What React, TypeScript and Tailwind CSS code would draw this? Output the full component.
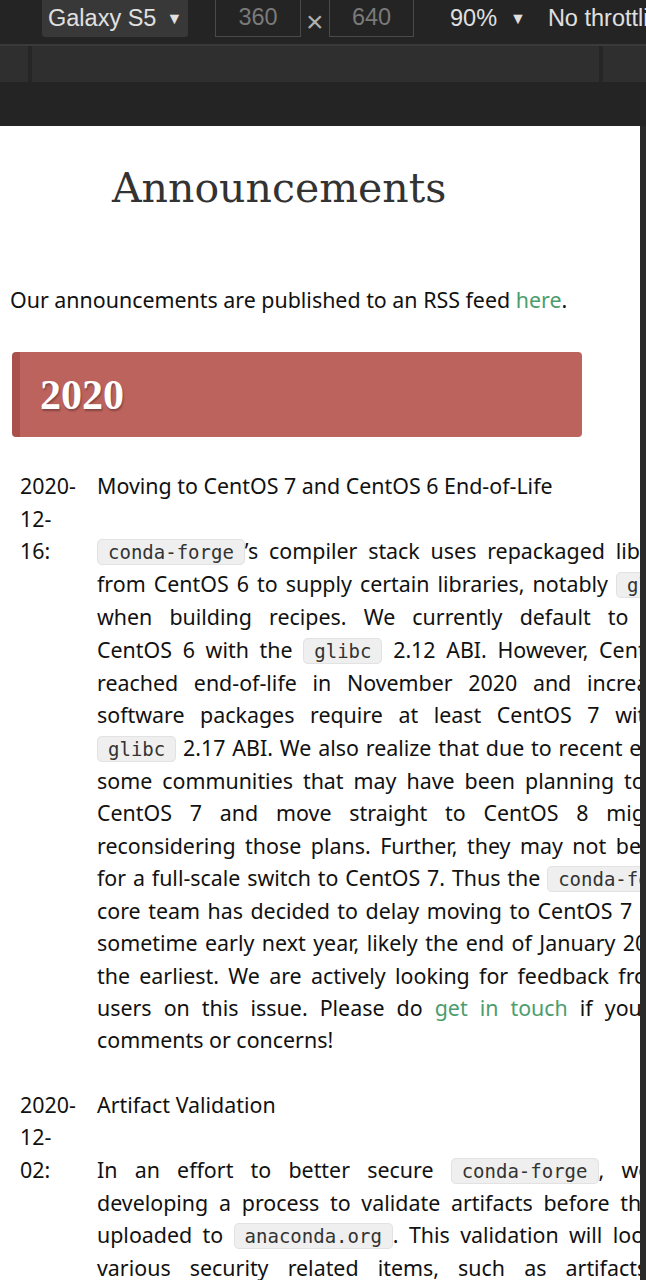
import React from "react";

type Part = string | { code: string } | { link: string };

interface Line {
  parts: Part[];
  w?: string;
  last?: boolean;
}

interface Entry {
  date: string[];
  title: string;
  lines: Line[];
}

// Each row is a justified line of the narrow mobile column; the page overflows its right edge.
const entries: Entry[] = [
  {
    date: ["2020-", "12-", "16:"],
    title: "Moving to CentOS 7 and CentOS 6 End-of-Life",
    lines: [
      { parts: [{ code: "conda-forge" }, "’s compiler stack uses repackaged libraries"], w: "w-[600px]" },
      { parts: ["from CentOS 6 to supply certain libraries, notably ", { code: "glibc" }, ","], w: "w-[604px]" },
      { parts: ["when building recipes. We currently default to using"], w: "w-[604px]" },
      { parts: ["CentOS 6 with the ", { code: "glibc" }, " 2.12 ABI. However, CentOS 6"], w: "w-[600px]" },
      { parts: ["reached end-of-life in November 2020 and increasingly"] },
      { parts: ["software packages require at least CentOS 7 with the"] },
      { parts: [{ code: "glibc" }, " 2.17 ABI. We also realize that due to recent events"], w: "w-[598px]" },
      { parts: ["some communities that may have been planning to skip"], w: "w-[598px]" },
      { parts: ["CentOS 7 and move straight to CentOS 8 might be"], w: "w-[612px]" },
      { parts: ["reconsidering those plans. Further, they may not be ready"] },
      { parts: ["for a full-scale switch to CentOS 7. Thus the ", { code: "conda-forge" }], w: "w-[598px]" },
      { parts: ["core team has decided to delay moving to CentOS 7 until"], w: "w-[588px]" },
      { parts: ["sometime early next year, likely the end of January 2021 at"], w: "w-[602px]" },
      { parts: ["the earliest. We are actively looking for feedback from"], w: "w-[570px]" },
      { parts: ["users on this issue. Please do ", { link: "get in touch" }, " if you have"], w: "w-[605px]" },
      { parts: ["comments or concerns!"], last: true },
    ],
  },
  {
    date: ["2020-", "12-", "02:"],
    title: "Artifact Validation",
    lines: [
      { parts: ["In an effort to better secure ", { code: "conda-forge" }, ", we are"], w: "w-[603px]" },
      { parts: ["developing a process to validate artifacts before they are"] },
      { parts: ["uploaded to ", { code: "anaconda.org" }, ". This validation will look for"], w: "w-[598px]" },
      { parts: ["various security related items, such as artifacts that"] },
      { parts: ["might be overwritten in the anaconda.org"] },
    ],
  },
];

function Code({ children }: { children: string }) {
  return (
    <code className="rounded-[5px] border border-[#e2e2e2] bg-[#efefef] px-[10px] py-[1px] font-['DejaVu_Sans_Mono',monospace] text-[19px] text-[#333]">
      {children}
    </code>
  );
}

function TextLine({ line }: { line: Line }) {
  return (
    <div
      className={`${line.w ?? "w-[610px]"} ${line.last ? "text-left" : "text-justify [text-align-last:justify]"}`}
    >
      {line.parts.map((p, i) => {
        if (typeof p === "string") return <React.Fragment key={i}>{p}</React.Fragment>;
        if ("code" in p) return <Code key={i}>{p.code}</Code>;
        return (
          <a key={i} className="text-[#4c9d6e]">
            {p.link}
          </a>
        );
      })}
    </div>
  );
}

function Toolbar() {
  return (
    <div className="font-['Liberation_Sans',Arial,sans-serif]">
      <div className="flex h-[44px] items-start whitespace-nowrap text-[23.5px]">
        <div className="ml-[42px] flex h-[37px] w-[146px] shrink-0 items-center gap-[10px] rounded-b-[3px] bg-[#383838] pl-[6px] text-[#e0e0e0]">
          Galaxy S5 <span className="text-[16px]">▼</span>
        </div>
        <div className="ml-[27px] flex h-[37px] w-[86px] shrink-0 items-center justify-center border border-t-0 border-[#4a4a4a] text-[#7a7a7a]">
          360
        </div>
        <div className="ml-[5px] mr-[6px] mt-[6px] w-[17px] shrink-0 text-center text-[30px] leading-[32px] text-[#b0b0b0]">×</div>
        <div className="flex h-[37px] w-[85px] shrink-0 items-center justify-center border border-t-0 border-[#4a4a4a] text-[#7a7a7a]">
          640
        </div>
        <div className="ml-[36px] flex h-[37px] shrink-0 items-center gap-[13px] text-[#e0e0e0]">
          90% <span className="text-[16px]">▼</span>
        </div>
        <div className="ml-[22px] flex h-[37px] shrink-0 items-center text-[#e0e0e0]">No throttling</div>
      </div>
      <div className="h-[2px] bg-[#3a3a3a]" />
      <div className="flex h-[36px] bg-[#2f2f2f]">
        <div className="ml-[28px] w-[4px] bg-[#262626]" />
        <div className="ml-[567px] w-[4px] bg-[#262626]" />
      </div>
      <div className="h-[44px]" />
    </div>
  );
}

export default function App() {
  return (
    <div className="flex h-[1280px] w-[646px] flex-col overflow-hidden bg-[#242424]">
      <Toolbar />
      <div className="flex flex-1">
        <div className="w-[640px] overflow-hidden bg-white font-['Noto_Sans',sans-serif] text-[21.4px] leading-[32.3px] text-[#111]">
          <h1 className="pl-[112px] pt-[32px] font-['DejaVu_Serif',serif] text-[41px] leading-[60px] text-[#333]">
            Announcements
          </h1>
          <p className="mt-[66px] pl-[10px]">
            Our announcements are published to an RSS feed <a className="text-[#4c9d6e]">here</a>.
          </p>
          <div className="ml-[12px] mt-[36px] flex h-[85px] w-[570px] items-center rounded-[4px] border-l-[8px] border-[#a9504d] bg-[#bd635e] pl-[20px]">
            <h2 className="font-['Liberation_Serif',serif] text-[42px] font-bold text-white [text-shadow:1px_2px_2px_rgba(0,0,0,0.3)]">
              2020
            </h2>
          </div>
          <dl className="mt-[33px] grid grid-cols-[97px_1fr]">
            {entries.map((e) => (
              <React.Fragment key={e.title}>
                <dt className="pl-[20px]">
                  {e.date.map((d) => (
                    <span key={d} className="block">
                      {d}
                    </span>
                  ))}
                </dt>
                <dd className="mb-[32.3px]">
                  <p className="mb-[32.3px]">{e.title}</p>
                  <div>
                    {e.lines.map((l, i) => (
                      <TextLine key={i} line={l} />
                    ))}
                  </div>
                </dd>
              </React.Fragment>
            ))}
          </dl>
        </div>
        <div className="flex-1 bg-[#2a2a2a]" />
      </div>
    </div>
  );
}
